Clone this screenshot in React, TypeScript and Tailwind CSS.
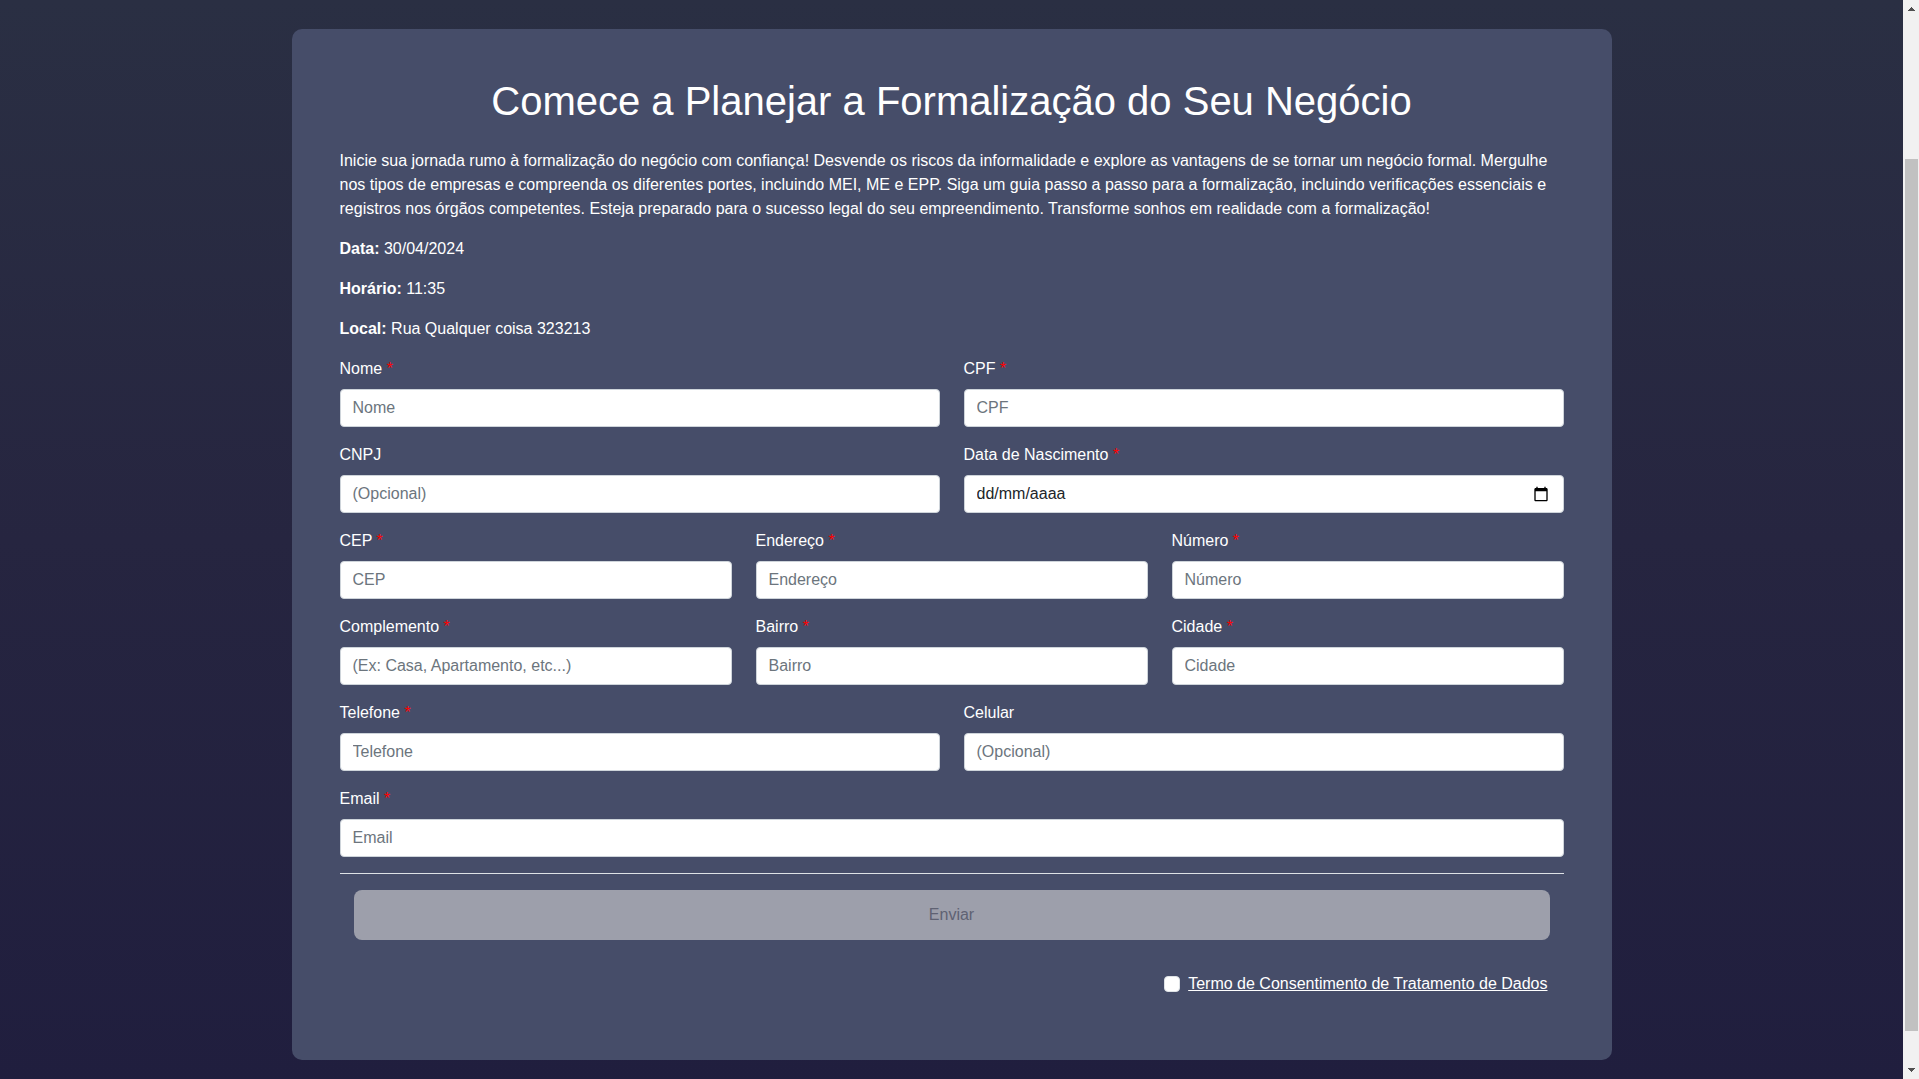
import { useId } from "react";

type FieldProps = {
  label: string;
  placeholder?: string;
  required?: boolean;
  type?: string;
};

const inputClass =
  "block h-[38px] w-full rounded border border-[#ced4da] bg-white px-3 py-1.5 text-base leading-6 text-[#212529] outline-none";

function FieldLabel({ id, label, required }: { id: string; label: string; required: boolean }) {
  return (
    <label htmlFor={id} className="mb-2 block">
      {label}
      {required && <span className="text-[#ff0000]"> *</span>}
    </label>
  );
}

function Field({ label, placeholder = label, required = true, type = "text" }: FieldProps) {
  const id = useId();
  return (
    <div className="min-w-0 flex-1">
      <FieldLabel id={id} label={label} required={required} />
      <input
        id={id}
        type={type}
        placeholder={placeholder}
        required={required}
        className={`${inputClass} placeholder:text-[#6c757d]`}
      />
    </div>
  );
}

function DateField({ label }: { label: string }) {
  const id = useId();
  return (
    <div className="min-w-0 flex-1">
      <FieldLabel id={id} label={label} required />
      <div className="relative">
        <input
          id={id}
          type="text"
          inputMode="numeric"
          placeholder="dd/mm/aaaa"
          required
          className={`${inputClass} placeholder:text-[#212529]`}
        />
        <button type="button" aria-label="Abrir calendário" className="absolute inset-y-0 right-[15px] flex items-center">
          <svg viewBox="0 0 24 24" className="size-4" fill="#000">
            <path d="M20 3h-1V1h-2v2H7V1H5v2H4c-1.1 0-2 .9-2 2v16c0 1.1.9 2 2 2h16c1.1 0 2-.9 2-2V5c0-1.1-.9-2-2-2zm0 18H4V8h16v13z" />
          </svg>
        </button>
      </div>
    </div>
  );
}

function Row({ children }: { children: React.ReactNode }) {
  return <div className="flex gap-6">{children}</div>;
}

function Scrollbar() {
  return (
    <div aria-hidden="true" className="flex w-4 shrink-0 flex-col items-center bg-[#f1f1f1]">
      <svg viewBox="0 0 16 16" className="size-4 shrink-0" fill="#505050" shapeRendering="crispEdges">
        <path d="M8 7h1v1h1v1h1v1h1v1H5v-1h1V9h1V8h1z" />
      </svg>
      <div className="mt-[143px] mb-8 w-[13px] flex-1 bg-[#c1c1c1]" />
      <svg viewBox="0 0 16 16" className="size-4 shrink-0" fill="#505050" shapeRendering="crispEdges">
        <path d="M5 5h7v1h-1v1h-1v1H9v1H8V8H7V7H6V6H5z" />
      </svg>
    </div>
  );
}

export default function App() {
  return (
    <div className="flex min-h-screen bg-[#201e3e] font-['Liberation_Sans',Arial,sans-serif] text-base leading-6 text-white">
      <main className="min-w-0 flex-1 bg-linear-to-b from-[#2a2f43] via-[#262540] to-[#201e3e] px-4 pt-[29px]">
        <section className="mx-auto max-w-[1320px] rounded-[10px] bg-[#464d69] p-12">
          <h1 className="mb-6 text-center text-[40px] leading-[48px]">Comece a Planejar a Formalização do Seu Negócio</h1>
          <div className="flex flex-col gap-4">
            <p>
              Inicie sua jornada rumo à formalização do negócio com confiança! Desvende os riscos da informalidade e
              explore as vantagens de se tornar um negócio formal. Mergulhe nos tipos de empresas e compreenda os
              diferentes portes, incluindo MEI, ME e EPP. Siga um guia passo a passo para a formalização, incluindo
              verificações essenciais e registros nos órgãos competentes. Esteja preparado para o sucesso legal do seu
              empreendimento. Transforme sonhos em realidade com a formalização!
            </p>
            <p>
              <strong>Data:</strong> 30/04/2024
            </p>
            <p>
              <strong>Horário:</strong> 11:35
            </p>
            <p>
              <strong>Local:</strong> Rua Qualquer coisa 323213
            </p>
            <form className="flex flex-col gap-4">
              <Row>
                <Field label="Nome" />
                <Field label="CPF" />
              </Row>
              <Row>
                <Field label="CNPJ" placeholder="(Opcional)" required={false} />
                <DateField label="Data de Nascimento" />
              </Row>
              <Row>
                <Field label="CEP" />
                <Field label="Endereço" />
                <Field label="Número" />
              </Row>
              <Row>
                <Field label="Complemento" placeholder="(Ex: Casa, Apartamento, etc...)" />
                <Field label="Bairro" />
                <Field label="Cidade" />
              </Row>
              <Row>
                <Field label="Telefone" type="tel" />
                <Field label="Celular" placeholder="(Opcional)" required={false} type="tel" />
              </Row>
              <Row>
                <Field label="Email" type="email" />
              </Row>
              <hr className="border-[#dee2e6]" />
              <button type="submit" disabled className="mx-3.5 h-[50px] rounded-lg bg-[#9d9fab] text-[#5f6273]">
                Enviar
              </button>
              <div className="my-4 flex items-center justify-end gap-2 pr-4">
                <input
                  id="termo"
                  type="checkbox"
                  aria-labelledby="termo-link"
                  className="size-4 appearance-none rounded border border-[#dee2e6] bg-white checked:bg-[#0d6efd]"
                />
                <a id="termo-link" href="#termo" className="underline">
                  Termo de Consentimento de Tratamento de Dados
                </a>
              </div>
            </form>
          </div>
        </section>
      </main>
      <Scrollbar />
    </div>
  );
}
